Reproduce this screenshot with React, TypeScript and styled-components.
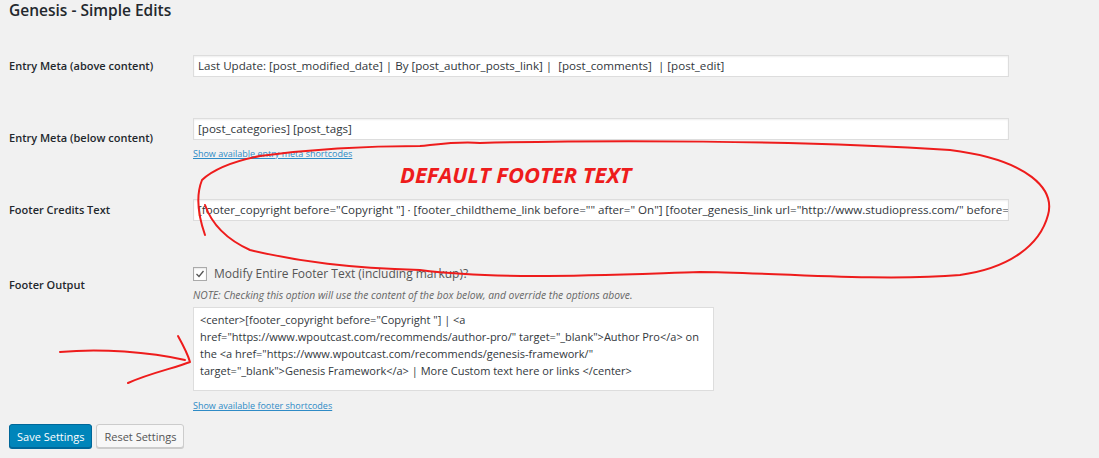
import React from "react";
import styled, { createGlobalStyle } from "styled-components";

const Global = createGlobalStyle`
  html, body { margin: 0; background: #f1f1f1; }
  body { font-family: "Open Sans", "Noto Sans", sans-serif; color: #23282d; }
`;

const Page = styled.div`
  position: relative;
  width: 1099px;
  height: 458px;
  overflow: hidden;
  padding: 0 9px;
  box-sizing: border-box;
`;

const Title = styled.h1`
  margin: 0;
  padding-top: 1px;
  font-size: 15.5px;
  font-weight: 600;
  line-height: 18px;
`;

const Row = styled.div<{ $top: number }>`
  display: grid;
  grid-template-columns: 184px 1fr;
  margin-top: ${(p) => p.$top}px;
  align-items: start;
`;

const Label = styled.div<{ $pad: number }>`
  font-size: 11px;
  font-weight: 600;
  padding-top: ${(p) => p.$pad}px;
  line-height: 14px;
`;

const Field = styled.div`
  display: flex;
  flex-direction: column;
`;

const Input = styled.div`
  width: 816px;
  height: 22px;
  box-sizing: border-box;
  background: #fff;
  border: 1px solid #ddd;
  box-shadow: inset 0 1px 2px rgba(0, 0, 0, 0.07);
  font-size: 11.6px;
  line-height: 20px;
  padding: 0 4px;
  white-space: nowrap;
  overflow: hidden;
  color: #32373c;
`;

const Link = styled.a<{ $mt: number }>`
  font-size: 9px;
  color: #2e8bc6;
  text-decoration: underline;
  margin-top: ${(p) => p.$mt}px;
  line-height: 12px;
`;

const CheckRow = styled.label`
  display: flex;
  align-items: center;
  gap: 7px;
  font-size: 12px;
  color: #555;
  line-height: 16px;
`;

const Box = styled.span`
  width: 12px;
  height: 12px;
  border: 1px solid #aaa;
  background: #fff;
  display: inline-flex;
  align-items: center;
  justify-content: center;
  box-shadow: inset 0 1px 2px rgba(0, 0, 0, 0.1);
`;

const Note = styled.div`
  font-size: 10.3px;
  font-style: italic;
  color: #666;
  margin-top: 7px;
  line-height: 12px;
`;

const Area = styled.div`
  width: 521px;
  height: 84px;
  box-sizing: border-box;
  margin-top: 6px;
  background: #fff;
  border: 1px solid #ddd;
  font-size: 11px;
  line-height: 17px;
  padding: 3px 6px;
  color: #32373c;
`;

const Buttons = styled.div`
  display: flex;
  gap: 4px;
  margin-top: 12px;
`;

const Button = styled.button<{ $primary?: boolean }>`
  height: 24px;
  padding: 0 7px;
  font-family: inherit;
  font-size: 11px;
  border-radius: 3px;
  border: 1px solid ${(p) => (p.$primary ? "#006799" : "#ccc")};
  background: ${(p) => (p.$primary ? "#0085ba" : "#f7f7f7")};
  color: ${(p) => (p.$primary ? "#fff" : "#555")};
  box-shadow: 0 1px 0 ${(p) => (p.$primary ? "#006799" : "#ccc")};
`;

const Overlay = styled.svg`
  position: absolute;
  left: 0;
  top: 0;
  pointer-events: none;
`;

export default function App() {
  return (
    <Page>
      <Global />
      <Title>Genesis - Simple Edits</Title>
      <Row $top={36}>
        <Label $pad={4}>Entry Meta (above content)</Label>
        <Field>
          <Input>Last Update: [post_modified_date] | By [post_author_posts_link] |&nbsp; [post_comments]&nbsp; | [post_edit]</Input>
        </Field>
      </Row>
      <Row $top={41}>
        <Label $pad={13}>Entry Meta (below content)</Label>
        <Field>
          <Input>[post_categories] [post_tags]</Input>
          <Link $mt={8}>Show available entry meta shortcodes</Link>
        </Field>
      </Row>
      <Row $top={39}>
        <Label $pad={4}>Footer Credits Text</Label>
        <Field>
          <Input>[footer_copyright before="Copyright "] · [footer_childtheme_link before="" after=" On"] [footer_genesis_link url="http://www.studiopress.com/" before=""] · [footer_wordpress_link]</Input>
        </Field>
      </Row>
      <Row $top={45}>
        <Label $pad={12}>Footer Output</Label>
        <Field>
          <CheckRow>
            <Box>
              <svg width="10" height="10" viewBox="0 0 10 10">
                <path d="M1.5 5 L4 7.5 L8.5 2" stroke="#555" strokeWidth="1.3" fill="none" />
              </svg>
            </Box>
            Modify Entire Footer Text (including markup)?
          </CheckRow>
          <Note>NOTE: Checking this option will use the content of the box below, and override the options above.</Note>
          <Area>
            &lt;center&gt;[footer_copyright before="Copyright "] | &lt;a href="https://www.wpoutcast.com/recommends/author-pro/" target="_blank"&gt;Author Pro&lt;/a&gt; on the &lt;a href="https://www.wpoutcast.com/recommends/genesis-framework/" target="_blank"&gt;Genesis Framework&lt;/a&gt; | More Custom text here or links &lt;/center&gt;
          </Area>
          <Link $mt={9}>Show available footer shortcodes</Link>
        </Field>
      </Row>
      <Buttons>
        <Button $primary>Save Settings</Button>
        <Button>Reset Settings</Button>
      </Buttons>
      <Overlay width="1099" height="458" viewBox="0 0 1099 458">
        <g stroke="#ee1c1c" strokeWidth="2" fill="none" strokeLinecap="round" strokeLinejoin="round">
          <path d="M205 235 C198 215 196 195 202 180 C215 168 240 160 260 156 C320 148 380 146 420 146 C440 144 460 141 480 143 C600 140 800 140 950 150 C1030 160 1055 190 1048 215 C1040 245 1010 268 960 275 C880 282 760 272 700 272 C600 275 500 280 420 270 C350 268 300 262 250 250 C228 240 212 225 205 205" />
          <path d="M60 352 C100 348 150 352 185 360" />
          <path d="M178 336 C183 345 188 355 190 362 C175 368 150 373 128 383" />
        </g>
        <text x="400" y="183" fill="#ee1c1c" fontSize="22" fontWeight="700" fontStyle="italic" fontFamily="'Open Sans', sans-serif">DEFAULT FOOTER TEXT</text>
      </Overlay>
    </Page>
  );
}
